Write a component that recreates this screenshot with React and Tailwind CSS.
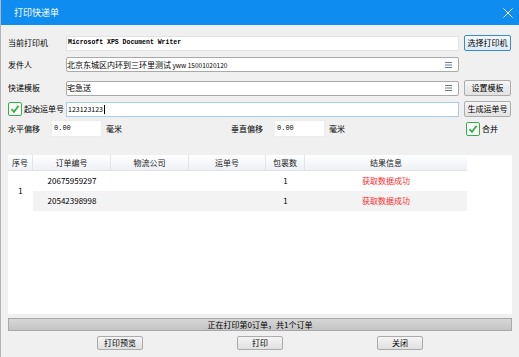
import React from 'react';

const Check = () => (
  <div className="w-[14px] h-[14px] border-[1.5px] border-[#2fb344] rounded-[2px] bg-white flex items-center justify-center">
    <svg width="10" height="10" viewBox="0 0 10 10">
      <path d="M1.5 5.2 L4 7.8 L8.6 1.8" stroke="#2fb344" strokeWidth="1.8" fill="none" />
    </svg>
  </div>
);

const Menu = () => (
  <svg width="7" height="6" viewBox="0 0 7 6" className="mr-[6px]">
    <path d="M0 0.5H7M0 3H7M0 5.5H7" stroke="#6b7b8c" strokeWidth="1" />
  </svg>
);

const Btn = ({ children, blue }) => (
  <div
    className={`w-[47px] h-[16px] flex items-center justify-center rounded-[2px] border text-[8px] leading-none ${
      blue
        ? 'border-[#3c8bd0] bg-gradient-to-b from-[#f2f8fd] to-[#dcecf9]'
        : 'border-[#acacac] bg-gradient-to-b from-[#f5f5f5] to-[#e2e2e2]'
    }`}
  >
    {children}
  </div>
);

const cols = [
  { name: '序号', w: 'w-[25px]' },
  { name: '订单编号', w: 'w-[78px]' },
  { name: '物流公司', w: 'w-[78px]' },
  { name: '运单号', w: 'w-[77px]' },
  { name: '包裹数', w: 'w-[39px]' },
  { name: '结果信息', w: 'w-[162px]' },
];

const orders = [
  { no: '20675959297', count: '1', msg: '获取数据成功' },
  { no: '20542398998', count: '1', msg: '获取数据成功' },
];

export default function App() {
  return (
    <div className="w-[519px] h-[357px] bg-[#f0f0f0] border-l border-[#b5b5b5] flex flex-col text-black [font-family:'Noto_Sans_CJK_SC','Noto_Sans',sans-serif] overflow-hidden">
      {/* title bar */}
      <div className="h-[25px] bg-[#0f8cf0] flex items-center justify-between pl-[13px] pr-[6px]">
        <span className="text-white text-[9px] leading-none">打印快递单</span>
        <svg width="10" height="10" viewBox="0 0 10 10">
          <path d="M0.5 0.5L9.5 9.5M9.5 0.5L0.5 9.5" stroke="white" strokeWidth="1" />
        </svg>
      </div>

      <div className="flex flex-col px-[7px]">
        {/* printer */}
        <div className="mt-[10px] h-[16px] flex items-center">
          <span className="w-[58px] text-[8px] leading-none">当前打印机</span>
          <div className="w-[393px] h-[15px] bg-white border border-[#e2e2e2] flex items-center pl-[1px]">
            <span className="[font-family:'Liberation_Mono',monospace] text-[6.5px] font-bold leading-none">Microsoft XPS Document Writer</span>
          </div>
          <div className="ml-[5px]"><Btn blue>选择打印机</Btn></div>
        </div>

        {/* sender */}
        <div className="mt-[6px] h-[15px] flex items-center">
          <span className="w-[58px] text-[8px] leading-none">发件人</span>
          <div className="w-[393px] h-[15px] bg-white border border-[#a9a9a9] rounded-[2px] flex items-center justify-between">
            <span className="text-[8px] leading-none">
              北京东城区内环到三环里测试
              <span className="text-[6.5px]"> yww 15001020120</span>
            </span>
            <Menu />
          </div>
        </div>

        {/* template */}
        <div className="mt-[8px] h-[16px] flex items-center">
          <span className="w-[58px] text-[8px] leading-none">快递模板</span>
          <div className="w-[393px] h-[15px] bg-white border border-[#a9a9a9] rounded-[2px] flex items-center justify-between">
            <span className="text-[8px] leading-none">宅急送</span>
            <Menu />
          </div>
          <div className="ml-[5px]"><Btn>设置模板</Btn></div>
        </div>

        {/* start number */}
        <div className="mt-[5px] h-[16px] flex items-center">
          <div className="w-[58px] flex items-center gap-[2px]">
            <Check />
            <span className="text-[8px] leading-none">起始运单号</span>
          </div>
          <div className="w-[393px] h-[15px] bg-white border border-[#a8cce9] flex items-center pl-[1px]">
            <span className="text-[7px] leading-none">123123123</span>
            <span className="w-px h-[9px] bg-black ml-px" />
          </div>
          <div className="ml-[5px]"><Btn>生成运单号</Btn></div>
        </div>

        {/* offsets */}
        <div className="mt-[3px] h-[17px] flex items-center">
          <span className="w-[43px] text-[8px] leading-none">水平偏移</span>
          <div className="w-[51px] h-[17px] bg-white border border-[#ececec] flex items-center pl-[2px]">
            <span className="[font-family:'Liberation_Mono',monospace] text-[7px] leading-none">0.00</span>
          </div>
          <span className="ml-[4px] w-[125px] text-[8px] leading-none">毫米</span>
          <span className="w-[43px] text-[8px] leading-none">垂直偏移</span>
          <div className="w-[51px] h-[17px] bg-white border border-[#ececec] flex items-center pl-[2px]">
            <span className="[font-family:'Liberation_Mono',monospace] text-[7px] leading-none">0.00</span>
          </div>
          <span className="ml-[4px] text-[8px] leading-none">毫米</span>
          <div className="ml-auto mr-[14px] flex items-center gap-[2px]">
            <Check />
            <span className="text-[8px] leading-none">合并</span>
          </div>
        </div>

        {/* table */}
        <div className="mt-[18px] h-[159px] bg-white flex flex-col">
          <div className="w-[459px] h-[16px] flex border-b border-[#e1e1e1] bg-gradient-to-b from-white to-[#eef1f6]">
            {cols.map((c, i) => (
              <div
                key={c.name}
                className={`${c.w} h-full flex items-center justify-center text-[8px] leading-none text-[#222] ${
                  i < cols.length - 1 ? 'border-r border-[#e4e4e4]' : ''
                }`}
              >
                {c.name}
              </div>
            ))}
          </div>
          <div className="flex">
            <div className="w-[25px] flex items-center justify-center text-[8px] leading-none">1</div>
            <div className="flex flex-col">
              {orders.map((o, i) => (
                <div key={o.no} className={`h-[20px] flex items-center ${i === 1 ? 'bg-[#f3f3f3] h-[19px]' : ''}`}>
                  <div className="w-[78px] text-center text-[8px] leading-none">{o.no}</div>
                  <div className="w-[78px]" />
                  <div className="w-[77px]" />
                  <div className="w-[39px] text-center text-[8px] leading-none">{o.count}</div>
                  <div className="w-[162px] text-center text-[8px] leading-none text-[#ff2a2a]">{o.msg}</div>
                </div>
              ))}
            </div>
          </div>
        </div>

        {/* progress */}
        <div className="mt-[4px] h-[13px] border border-[#a9a9a9] bg-gradient-to-b from-[#d6d6d6] to-[#c4c4c4] flex items-center justify-center">
          <span className="text-[8px] leading-none">正在打印第0订单，共1个订单</span>
        </div>

        {/* bottom buttons */}
        <div className="mt-[5px] flex justify-center gap-[94px]">
          <div className="w-[46px] h-[14px] flex items-center justify-center rounded-[2px] border border-[#acacac] bg-gradient-to-b from-[#f5f5f5] to-[#e0e0e0] text-[8px] leading-none">打印预览</div>
          <div className="w-[46px] h-[14px] flex items-center justify-center rounded-[2px] border border-[#acacac] bg-gradient-to-b from-[#f5f5f5] to-[#e0e0e0] text-[8px] leading-none">打印</div>
          <div className="w-[46px] h-[14px] flex items-center justify-center rounded-[2px] border border-[#acacac] bg-gradient-to-b from-[#f5f5f5] to-[#e0e0e0] text-[8px] leading-none">关闭</div>
        </div>
      </div>
    </div>
  );
}
